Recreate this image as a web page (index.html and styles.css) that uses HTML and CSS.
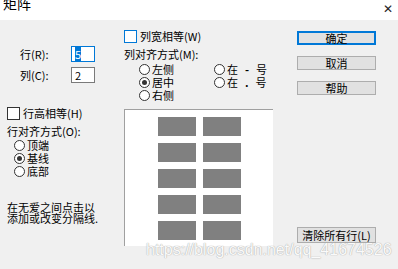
FILE: index.html
```html
<!DOCTYPE html>
<html lang="zh">
<head>
  <meta charset="UTF-8">
  <title>矩阵</title>
  <link rel="stylesheet" href="styles.css">
</head>
<body>
  <div class="titlebar">
    <span class="title">矩阵</span>
    <span class="close">✕</span>
  </div>
  <div class="dialog">
    <div class="col-left">
      <div class="size-grid">
        <span>行(R):</span><div class="field active"><span class="sel">5</span></div>
        <span>列(C):</span><div class="field">2</div>
      </div>
      <div class="check"><span class="box"></span>行高相等(H)</div>
      <div class="caption">行对齐方式(O):</div>
      <div class="radios">
        <div class="radio"><span class="dot"></span>顶端</div>
        <div class="radio on"><span class="dot"></span>基线</div>
        <div class="radio"><span class="dot"></span>底部</div>
      </div>
      <div class="hint">在无爱之间点击以<br>添加或改变分隔线.</div>
    </div>

    <div class="col-mid">
      <div class="check"><span class="box blue"></span>列宽相等(W)</div>
      <div class="caption">列对齐方式(M):</div>
      <div class="radio-grid">
        <div class="radio"><span class="dot"></span>左侧</div>
        <div class="radio"><span class="dot"></span>在 <b class="mark">-</b> 号</div>
        <div class="radio on"><span class="dot"></span>居中</div>
        <div class="radio"><span class="dot"></span>在 <b class="mark">.</b> 号</div>
        <div class="radio"><span class="dot"></span>右侧</div>
      </div>
      <div class="preview">
        <div class="cells">
          <span></span><span></span>
          <span></span><span></span>
          <span></span><span></span>
          <span></span><span></span>
          <span></span><span></span>
        </div>
      </div>
    </div>

    <div class="col-right">
      <button class="btn default">确定</button>
      <button class="btn">取消</button>
      <button class="btn">帮助</button>
      <button class="btn clear">清除所有行(L)</button>
    </div>
  </div>
  <div class="watermark">https://blog.csdn.net/qq_41674526</div>
</body>
</html>
```

FILE: styles.css
```css
body {
  margin: 0;
  width: 398px;
  height: 269px;
  overflow: hidden;
  position: relative;
  background: #f0f0f0;
  color: #000;
  font-family: "Noto Sans CJK SC", "Liberation Sans", sans-serif;
  font-size: 11px;
  line-height: 13px;
}

.titlebar {
  height: 20px;
  background: #fff;
  display: flex;
  justify-content: space-between;
  overflow: hidden;
}

.title {
  font-size: 14px;
  line-height: 14px;
  margin: -4px 0 0 3px;
}

.close {
  font-family: "DejaVu Sans", sans-serif;
  font-size: 12px;
  line-height: 12px;
  margin: 3px 5px 0 0;
  color: #222;
}

.dialog {
  display: flex;
  height: 249px;
}

/* left column */
.col-left {
  width: 117px;
  padding-left: 7px;
  display: flex;
  flex-direction: column;
}

.size-grid {
  display: grid;
  grid-template-columns: 51px 24px;
  row-gap: 5px;
  align-items: center;
  margin: 26px 0 0 13px;
}

.field {
  height: 16px;
  box-sizing: border-box;
  border: 1px solid #7a7a7a;
  background: #fff;
  padding-left: 3px;
  line-height: 14px;
}

.field.active {
  border-color: #0078d7;
}

.sel {
  background: #0078d7;
  color: #fff;
}

.check {
  display: flex;
  align-items: center;
  gap: 3px;
  height: 13px;
}

.col-left .check {
  margin-top: 24px;
}

.box {
  width: 13px;
  height: 13px;
  box-sizing: border-box;
  border: 1px solid #333;
  background: #fff;
}

.box.blue {
  border-color: #0078d7;
}

.caption {
  margin-top: 5px;
}

.radios {
  margin: 1px 0 0 7px;
}

.radio {
  display: flex;
  align-items: center;
  gap: 2px;
  height: 13px;
}

.dot {
  width: 11px;
  height: 11px;
  box-sizing: border-box;
  border: 1px solid #333;
  border-radius: 50%;
  background: #fff;
  position: relative;
}

.radio.on .dot::after {
  content: "";
  position: absolute;
  left: 2px;
  top: 2px;
  width: 5px;
  height: 5px;
  border-radius: 50%;
  background: #333;
}

.mark {
  margin: 0 5px;
}

.hint {
  margin-top: 24px;
  line-height: 11px;
}

/* middle column */
.col-mid {
  width: 149px;
  padding-top: 10px;
  display: flex;
  flex-direction: column;
}

.radio-grid {
  display: grid;
  grid-template-columns: 75px auto;
  margin: 2px 0 0 15px;
}

.preview {
  margin-top: 7px;
  height: 137px;
  box-sizing: border-box;
  background: #fff;
  border-top: 1px solid #a0a0a0;
  border-left: 1px solid #a0a0a0;
  display: flex;
  justify-content: center;
  padding: 7px 0 0 1px;
}

.cells {
  display: grid;
  grid-template-columns: 38px 38px;
  grid-auto-rows: 19px;
  column-gap: 7px;
  row-gap: 7px;
}

.cells span {
  background: #808080;
}

/* right column */
.col-right {
  margin-left: 24px;
  width: 79px;
  padding-top: 11px;
  display: flex;
  flex-direction: column;
  gap: 11px;
}

.btn {
  height: 14px;
  padding: 0;
  box-sizing: border-box;
  border: 1px solid #adadad;
  background: #e1e1e1;
  font: inherit;
  line-height: 12px;
  color: #000;
}

.btn.default {
  border: 2px solid #0078d7;
  line-height: 10px;
}

.btn.clear {
  height: 16px;
  margin-top: 121px;
  line-height: 14px;
}

.watermark {
  position: absolute;
  left: 146px;
  top: 241px;
  font-family: "Liberation Sans", sans-serif;
  font-size: 16px;
  line-height: 18px;
  color: #fafafa;
  text-shadow: 0 0 1px #a8a8a8, 0 0 1px #bdbdbd;
}
```
